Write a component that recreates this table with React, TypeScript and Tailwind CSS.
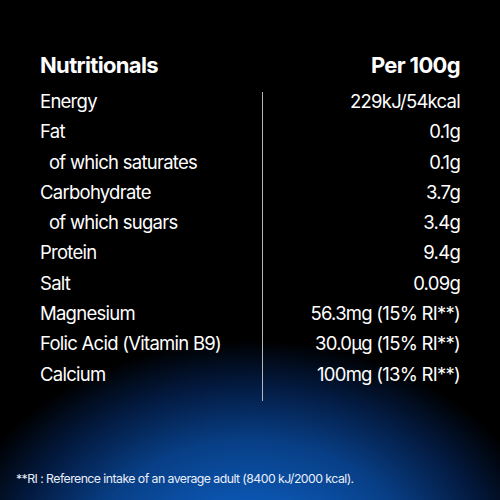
const rows: [string, string, boolean?][] = [
  ["Energy", "229kJ/54kcal"],
  ["Fat", "0.1g"],
  ["of which saturates", "0.1g", true],
  ["Carbohydrate", "3.7g"],
  ["of which sugars", "3.4g", true],
  ["Protein", "9.4g"],
  ["Salt", "0.09g"],
  ["Magnesium", "56.3mg (15% RI**)"],
  ["Folic Acid (Vitamin B9)", "30.0µg (15% RI**)"],
  ["Calcium", "100mg (13% RI**)"],
];

const App = () => {
  return (
    <div
      className="w-[500px] h-[500px] bg-black text-white flex flex-col overflow-hidden"
      style={{
        fontFamily: "Inter, 'Liberation Sans', sans-serif",
        backgroundImage:
          "radial-gradient(ellipse 300px 225px at 250px 565px, #0d60c6 0%, #0b54ae 30%, #083f86 55%, #031a40 80%, #000 100%)",
      }}
    >
      <div className="flex justify-between px-10 pt-[51px] leading-[28px] text-[22px] font-bold tracking-[-0.03em]">
        <span>Nutritionals</span>
        <span>Per 100g</span>
      </div>
      <div className="flex px-10 mt-[7px]">
        <div className="w-[222px] flex flex-col">
          {rows.map(([label, , indent]) => (
            <div
              key={label}
              className={`h-[30.3px] leading-[30.3px] text-[18.5px] tracking-[-0.04em] whitespace-nowrap ${indent ? "pl-[9px]" : ""}`}
            >
              {label}
            </div>
          ))}
        </div>
        <div className="w-px bg-[#b5b5b5] h-[309px] mt-[6px]" />
        <div className="flex-1 flex flex-col items-end">
          {rows.map(([label, value]) => (
            <div
              key={label}
              className="h-[30.3px] leading-[30.3px] text-[18.5px] tracking-[-0.04em] whitespace-nowrap"
            >
              {value}
            </div>
          ))}
        </div>
      </div>
      <div className="mt-auto pl-4 pb-[12px] text-[12.3px] tracking-[-0.045em] text-[#e8eef8]">
        **RI : Reference intake of an average adult (8400 kJ/2000 kcal).
      </div>
    </div>
  );
};

export default App;
